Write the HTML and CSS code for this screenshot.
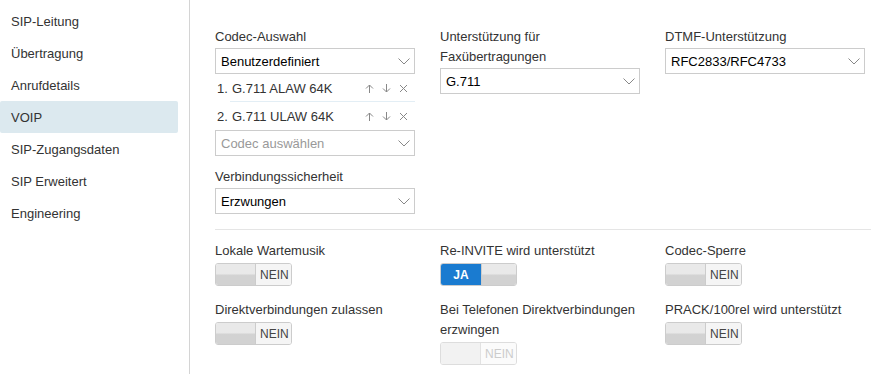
FILE: index.html
```html
<!DOCTYPE html>
<html lang="de">
<head>
<meta charset="utf-8">
<title>VOIP</title>
<link rel="stylesheet" href="styles.css">
</head>
<body>
<div class="page">
  <nav class="sidebar">
    <div class="nav-item">SIP-Leitung</div>
    <div class="nav-item">Übertragung</div>
    <div class="nav-item">Anrufdetails</div>
    <div class="nav-item active">VOIP</div>
    <div class="nav-item">SIP-Zugangsdaten</div>
    <div class="nav-item">SIP Erweitert</div>
    <div class="nav-item">Engineering</div>
  </nav>
  <main class="content">
    <section class="grid top">
      <div class="col">
        <div class="field">
          <div class="label">Codec-Auswahl</div>
          <div class="select"><span>Benutzerdefiniert</span><svg class="chev" viewBox="0 0 12 7"><path d="M0.5 0.5 L6 6 L11.5 0.5"/></svg></div>
          <ul class="codecs">
            <li class="codec"><span class="num">1.</span><span class="name">G.711 ALAW 64K</span>
              <span class="acts">
                <svg viewBox="0 0 9 9"><path d="M4.5 9 V1 M1 4.5 L4.5 1 L8 4.5"/></svg>
                <svg viewBox="0 0 9 9"><path d="M4.5 0 V8 M1 4.5 L4.5 8 L8 4.5"/></svg>
                <svg viewBox="0 0 9 9"><path d="M1 1 L8 8 M8 1 L1 8"/></svg>
              </span>
            </li>
            <li class="codec"><span class="num">2.</span><span class="name">G.711 ULAW 64K</span>
              <span class="acts">
                <svg viewBox="0 0 9 9"><path d="M4.5 9 V1 M1 4.5 L4.5 1 L8 4.5"/></svg>
                <svg viewBox="0 0 9 9"><path d="M4.5 0 V8 M1 4.5 L4.5 8 L8 4.5"/></svg>
                <svg viewBox="0 0 9 9"><path d="M1 1 L8 8 M8 1 L1 8"/></svg>
              </span>
            </li>
          </ul>
          <div class="select placeholder"><span>Codec auswählen</span><svg class="chev" viewBox="0 0 12 7"><path d="M0.5 0.5 L6 6 L11.5 0.5"/></svg></div>
        </div>
        <div class="field">
          <div class="label">Verbindungssicherheit</div>
          <div class="select"><span>Erzwungen</span><svg class="chev" viewBox="0 0 12 7"><path d="M0.5 0.5 L6 6 L11.5 0.5"/></svg></div>
        </div>
      </div>
      <div class="col">
        <div class="field">
          <div class="label">Unterstützung für<br>Faxübertragungen</div>
          <div class="select"><span>G.711</span><svg class="chev" viewBox="0 0 12 7"><path d="M0.5 0.5 L6 6 L11.5 0.5"/></svg></div>
        </div>
      </div>
      <div class="col">
        <div class="field">
          <div class="label">DTMF-Unterstützung</div>
          <div class="select"><span>RFC2833/RFC4733</span><svg class="chev" viewBox="0 0 12 7"><path d="M0.5 0.5 L6 6 L11.5 0.5"/></svg></div>
        </div>
      </div>
    </section>
    <hr class="divider">
    <section class="grid toggles">
      <div class="tfield">
        <div class="label">Lokale Wartemusik</div>
        <div class="switch off"><span class="handle"></span><span class="state">NEIN</span></div>
      </div>
      <div class="tfield">
        <div class="label">Re-INVITE wird unterstützt</div>
        <div class="switch on"><span class="state">JA</span><span class="handle"></span></div>
      </div>
      <div class="tfield">
        <div class="label">Codec-Sperre</div>
        <div class="switch off"><span class="handle"></span><span class="state">NEIN</span></div>
      </div>
      <div class="tfield">
        <div class="label">Direktverbindungen zulassen</div>
        <div class="switch off"><span class="handle"></span><span class="state">NEIN</span></div>
      </div>
      <div class="tfield">
        <div class="label">Bei Telefonen Direktverbindungen<br>erzwingen</div>
        <div class="switch off disabled"><span class="handle"></span><span class="state">NEIN</span></div>
      </div>
      <div class="tfield">
        <div class="label">PRACK/100rel wird unterstützt</div>
        <div class="switch off"><span class="handle"></span><span class="state">NEIN</span></div>
      </div>
    </section>
  </main>
</div>
</body>
</html>
```
FILE: styles.css
```css
* { box-sizing: border-box; }
html, body { margin: 0; padding: 0; background: #fff; }
body {
  font-family: "Liberation Sans", Arial, sans-serif;
  font-size: 13px;
  color: #333;
  overflow: hidden;
}
.page {
  display: flex;
  width: 871px;
  height: 374px;
}
.sidebar {
  width: 190px;
  flex: none;
  padding-top: 5px;
  padding-right: 11px;
  border-right: 1px solid #d4d4d4;
}
.nav-item {
  height: 32px;
  line-height: 33px;
  padding-left: 11px;
  color: #333;
  border-radius: 2px;
}
.nav-item.active { background: #dce9ef; }
.content {
  flex: 1;
  padding: 26px 0 0 25px;
  min-width: 0;
}
.grid {
  display: grid;
  grid-template-columns: 225px 225px 1fr;
}
.label {
  line-height: 20px;
  color: #333;
}
.top .label { padding-top: 1px; }
.field { margin-bottom: 10px; }
.select {
  margin-top: 1px;
  width: 200px;
  height: 26px;
  border: 1px solid #ccc;
  display: flex;
  align-items: center;
  justify-content: space-between;
  padding: 0 4px 0 5px;
  color: #000;
  background: #fff;
}
.select.placeholder { color: #999; margin-top: 0; }
.chev {
  width: 12px;
  height: 7px;
  fill: none;
  stroke: #888;
  stroke-width: 1;
}
.codecs {
  list-style: none;
  margin: 0;
  padding: 0;
  width: 200px;
}
.codec {
  height: 28px;
  display: flex;
  align-items: center;
  position: relative;
  color: #333;
}
.codec::after {
  content: "";
  position: absolute;
  left: 15px;
  right: 0;
  bottom: 0;
  border-bottom: 1px solid #e3eef5;
}
.codec:last-child::after { display: none; }
.num { width: 17px; padding-left: 2px; }
.name { flex: 1; }
.acts {
  display: flex;
  gap: 8px;
  padding-right: 7px;
}
.acts svg {
  width: 9px;
  height: 9px;
  fill: none;
  stroke: #888;
  stroke-width: 1;
}
.divider {
  margin: 5px 0 0 0;
  border: 0;
  border-top: 1px solid #e5e5e5;
  height: 0;
}
.toggles { padding-top: 11px; row-gap: 14px; }
.switch {
  margin-top: 2px;
  width: 77px;
  height: 23px;
  border: 1px solid #ccc;
  border-radius: 3px;
  display: flex;
  overflow: hidden;
  font-size: 12px;
}
.handle {
  width: 40px;
  flex: none;
  background: linear-gradient(#e9e9e9 0, #e9e9e9 45%, #d2d2d2 55%, #d2d2d2 100%);
}
.off .handle { border-right: 1px solid #ccc; }
.on .handle { border-left: 1px solid #ccc; flex: 1; }
.state {
  flex: 1;
  display: flex;
  align-items: center;
  padding-left: 4px;
  background: #f5f5f5;
  color: #444;
}
.on .state {
  flex: none;
  width: 40px;
  justify-content: center;
  padding-left: 0;
  background: #1a7bd0;
  color: #fff;
  font-weight: bold;
}
.disabled { border-color: #ddd; }
.disabled .handle { background: #f2f2f2; border-right-color: #e2e2e2; }
.disabled .state { background: #fbfbfb; color: #ccc; }
```
